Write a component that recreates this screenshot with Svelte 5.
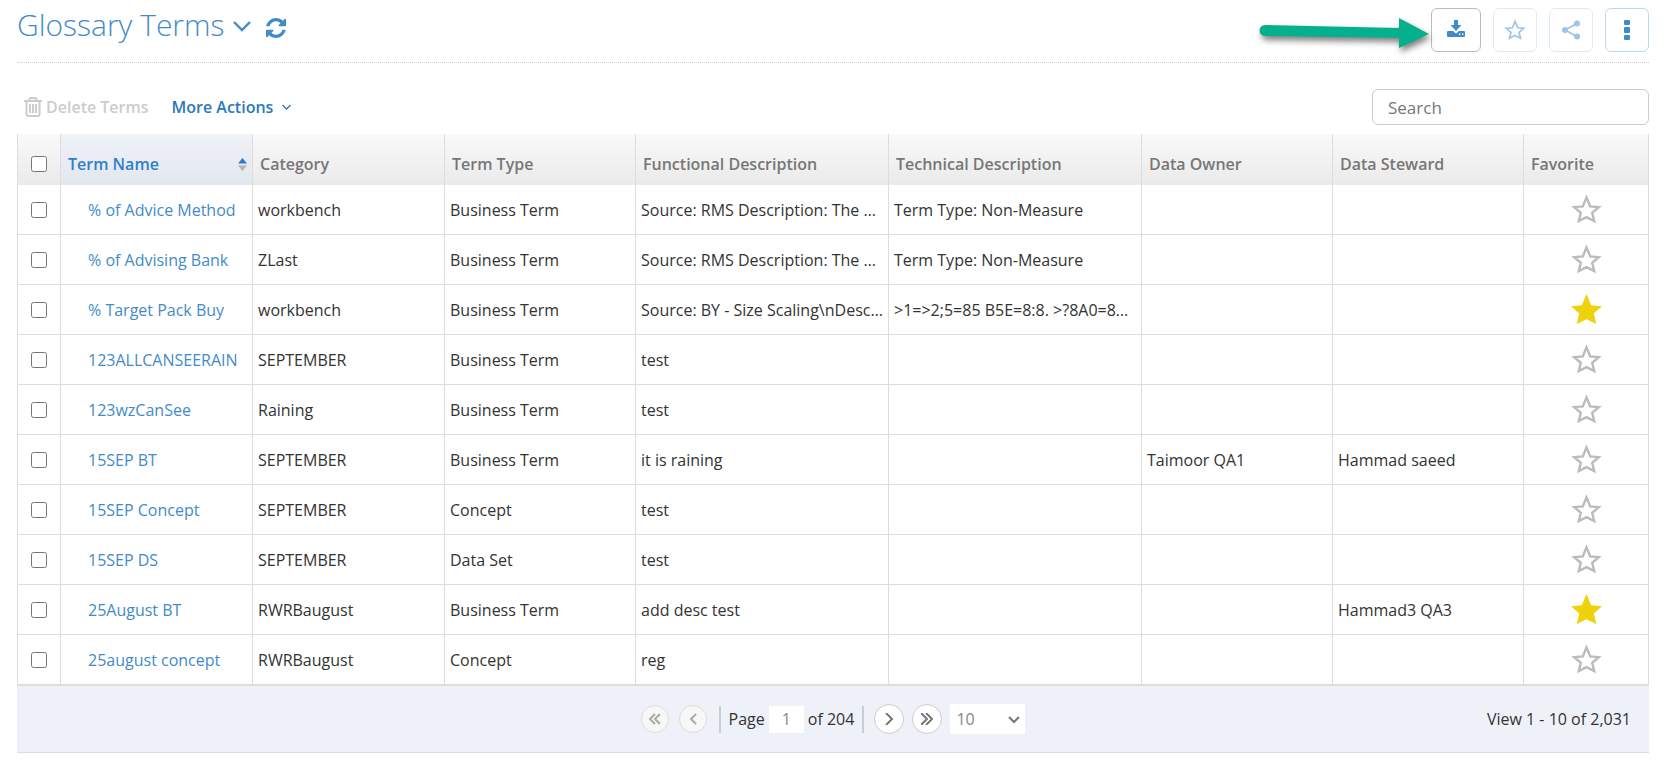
<script lang="ts">
  interface Term {
    name: string;
    category: string;
    type: string;
    functional: string;
    technical?: string;
    owner?: string;
    steward?: string;
    favorite?: boolean;
  }

  let terms = $state<Term[]>([
    { name: "% of Advice Method", category: "workbench", type: "Business Term", functional: "Source: RMS Description: The advice method", technical: "Term Type: Non-Measure" },
    { name: "% of Advising Bank", category: "ZLast", type: "Business Term", functional: "Source: RMS Description: The advising bank", technical: "Term Type: Non-Measure" },
    { name: "% Target Pack Buy", category: "workbench", type: "Business Term", functional: "Source: BY - Size Scaling\\nDescription: target", technical: ">1=>2;5=85 B5E=8:8. >?8A0=85 B5E=8:8", favorite: true },
    { name: "123ALLCANSEERAIN", category: "SEPTEMBER", type: "Business Term", functional: "test" },
    { name: "123wzCanSee", category: "Raining", type: "Business Term", functional: "test" },
    { name: "15SEP BT", category: "SEPTEMBER", type: "Business Term", functional: "it is raining", owner: "Taimoor QA1", steward: "Hammad saeed" },
    { name: "15SEP Concept", category: "SEPTEMBER", type: "Concept", functional: "test" },
    { name: "15SEP DS", category: "SEPTEMBER", type: "Data Set", functional: "test" },
    { name: "25August BT", category: "RWRBaugust", type: "Business Term", functional: "add desc test", steward: "Hammad3 QA3", favorite: true },
    { name: "25august concept", category: "RWRBaugust", type: "Concept", functional: "reg" },
  ]);

  let search = $state("");
  let page = $state("1");
  let pageSize = $state("10");
</script>

<div class="screen">
  <header>
    <h1>Glossary Terms</h1>
    <button class="bare title-caret" aria-label="Switch view">
      <svg width="18" height="12" viewBox="0 0 18 12"><path d="M1 2l8 8 8-8" fill="none" stroke="currentColor" stroke-width="2.4" /></svg>
    </button>
    <button class="bare refresh" aria-label="Refresh">
      <svg width="20" height="20" viewBox="0 0 1536 1536">
        <path fill="currentColor" d="M1511 928q0 5-1 7-64 268-268 434.500T764 1536q-146 0-282.500-55T238 1324l-129 129q-19 19-45 19t-45-19-19-45V960q0-26 19-45t45-19h448q26 0 45 19t19 45-19 45l-137 137q71 66 161 102t187 36q134 0 250-65t186-179q11-17 53-117 8-23 30-23h192q13 0 22.500 9.500t9.500 22.500zm25-800v448q0 26-19 45t-45 19h-448q-26 0-45-19t-19-45 19-45l138-138Q969 256 768 256q-134 0-250 65T332 500q-11 17-53 117-8 23-30 23H50q-13 0-22.500-9.500T18 608v-7q65-268 270-434.500T768 0q146 0 284 55.500T1297 212l130-129q19-19 45-19t45 19 19 45z" />
      </svg>
    </button>

    <svg class="pointer" width="180" height="44" viewBox="0 0 180 44" aria-hidden="true">
      <path d="M14 17l134 3V10l30 16-30 14V30L14 28a5.500 5.500 0 0 1 0-11z" fill="#06b08f" />
    </svg>

    <div class="tools">
      <button class="tool download" aria-label="Download">
        <svg width="18" height="17" viewBox="0 0 18 17" fill="currentColor">
          <path d="M7 0h4v5h3.500L9 11 3.500 5H7z" />
          <path d="M1 11h5l3 2.500L12 11h5a1 1 0 0 1 1 1v4a1 1 0 0 1-1 1H1a1 1 0 0 1-1-1v-4a1 1 0 0 1 1-1z" />
          <path d="M12 13.500h1.400V15H12zM15 13.500h1.400V15H15z" fill="#fff" />
        </svg>
      </button>
      <button class="tool faded" aria-label="Add to favorites">
        {@render star(22, false)}
      </button>
      <button class="tool faded" aria-label="Share">
        <svg width="18" height="20" viewBox="0 0 18 20" fill="currentColor">
          <path d="M15 3.500L3 10l12 6.500" fill="none" stroke="currentColor" stroke-width="1.800" />
          <circle cx="15" cy="3.500" r="3" /><circle cx="3" cy="10" r="3" /><circle cx="15" cy="16.500" r="3" />
        </svg>
      </button>
      <button class="tool" aria-label="More options">
        <svg width="6" height="20" viewBox="0 0 6 20" fill="currentColor">
          <rect width="6" height="5" rx="1" /><rect y="7" width="6" height="6" rx="1" /><rect y="15" width="6" height="5" rx="1" />
        </svg>
      </button>
    </div>
  </header>

  <div class="actions">
    <button class="bare delete" disabled>
      <svg width="18" height="20" viewBox="0 0 18 20" fill="none" stroke="currentColor" stroke-width="2">
        <path d="M0 4h18M5.500 4V2q0-1 1-1h5q1 0 1 1v2" />
        <path d="M2.500 4.500v12.500q0 2 2 2h9q2 0 2-2V4.500M6 7v9M9 7v9M12 7v9" />
      </svg>
      Delete Terms
    </button>
    <button class="bare more">
      More Actions
      <svg width="9" height="6" viewBox="0 0 9 6"><path d="M.500 1l4 4 4-4" fill="none" stroke="currentColor" stroke-width="1.300" /></svg>
    </button>
    <input class="search" type="text" placeholder="Search" aria-label="Search" bind:value={search} />
  </div>

  <table>
    <colgroup>
      <col class="c-check" />
      <col class="c-name" />
      <col class="c-name" />
      <col class="c-person" />
      <col class="c-desc" />
      <col class="c-desc" />
      <col class="c-person" />
      <col class="c-person" />
      <col class="c-fav" />
    </colgroup>
    <thead>
      <tr>
        <th class="check"><input type="checkbox" aria-label="Select all terms" /></th>
        <th class="sorted" aria-sort="ascending">
          <span class="sort">
            Term Name
            <svg width="9" height="13" viewBox="0 0 9 13"><path d="M0 5.500L4.500 0 9 5.500z" fill="#2d7bd0" /><path d="M0 7.500h9L4.500 13z" fill="#b4b4b4" /></svg>
          </span>
        </th>
        <th>Category</th>
        <th>Term Type</th>
        <th>Functional Description</th>
        <th>Technical Description</th>
        <th>Data Owner</th>
        <th>Data Steward</th>
        <th>Favorite</th>
      </tr>
    </thead>
    <tbody>
      {#each terms as term (term.name)}
        <tr>
          <td class="check"><input type="checkbox" aria-label={`Select ${term.name}`} /></td>
          <td class="name"><a href="#term">{term.name}</a></td>
          <td>{term.category}</td>
          <td>{term.type}</td>
          <td>{term.functional}</td>
          <td>{term.technical ?? ""}</td>
          <td>{term.owner ?? ""}</td>
          <td>{term.steward ?? ""}</td>
          <td class="fav">
            <button
              class="bare"
              class:on={term.favorite}
              aria-label={`Favorite ${term.name}`}
              aria-pressed={!!term.favorite}
              onclick={() => (term.favorite = !term.favorite)}
            >
              {@render star(31, !!term.favorite)}
            </button>
          </td>
        </tr>
      {/each}
    </tbody>
  </table>

  <footer>
    <nav class="pager" aria-label="Pagination">
      <button class="round" disabled aria-label="First page">
        <svg width="12" height="12" viewBox="0 0 12 12"><path d="M6 1L1 6l5 5M11 1L6 6l5 5" /></svg>
      </button>
      <button class="round" disabled aria-label="Previous page">
        <svg width="12" height="12" viewBox="0 0 12 12"><path d="M9 1L4 6l5 5" /></svg>
      </button>
      <label class="page">
        Page
        <input type="text" bind:value={page} />
        of 204
      </label>
      <button class="round" aria-label="Next page">
        <svg width="12" height="12" viewBox="0 0 12 12"><path d="M3 0l6 6-6 6" /></svg>
      </button>
      <button class="round" aria-label="Last page">
        <svg width="12" height="12" viewBox="0 0 12 12"><path d="M0 0l6 6-6 6M5 0l6 6-6 6" /></svg>
      </button>
      <span class="size">
        <select aria-label="Rows per page" bind:value={pageSize}>
          <option>10</option>
          <option>20</option>
          <option>50</option>
        </select>
        <svg width="12" height="8" viewBox="0 0 12 8"><path d="M1 1l5 5 5-5" /></svg>
      </span>
    </nav>
    <span class="range">View 1 - 10 of 2,031</span>
  </footer>
</div>

{#snippet star(size: number, filled: boolean)}
  <svg width={size} height={size} viewBox="0 0 31 31" aria-hidden="true">
    {#if filled}
      <path d="M15.500 0l4.700 11.300 10.800 1-8.200 7.200 2.500 10.500-9.800-4.800L5.700 30l2.500-10.500L0 12.300l10.800-1z" fill="currentColor" />
    {:else}
      <path d="M15.500 3.400l3.700 9 8.600.700-6.600 5.700 2 8.300-7.700-3.900-7.700 3.900 2-8.300-6.600-5.700 8.600-.700z" fill="none" stroke="currentColor" stroke-width="2.400" />
    {/if}
  </svg>
{/snippet}

<style>
  :global(body) {
    background: #fff;
  }
  .screen {
    padding: 8px 16px 16px 17px;
    font-family: "Open Sans", sans-serif;
    font-size: 16px;
    line-height: 22px;
    color: #333;
  }
  button,
  input,
  select {
    font: inherit;
    box-sizing: border-box;
    margin: 0;
  }
  svg {
    display: block;
    flex: none;
  }
  .bare {
    display: flex;
    align-items: center;
    padding: 0;
    border: 0;
    background: none;
    color: inherit;
  }
  header {
    display: flex;
    align-items: flex-start;
    height: 54px;
    border-bottom: 1px dotted #ccc;
    color: #428bca;
  }
  h1 {
    margin: 0;
    font-size: 30px;
    line-height: 34px;
    font-weight: 300;
  }
  .title-caret {
    margin-left: 8px;
    height: 36px;
  }
  .refresh {
    margin-left: 15px;
    height: 40px;
  }
  .pointer {
    margin-left: auto;
    filter: drop-shadow(2px 4px 3px rgb(0 0 0 / 50%));
  }
  .tools {
    display: flex;
    gap: 12px;
  }
  .tool {
    display: flex;
    align-items: center;
    justify-content: center;
    width: 44px;
    height: 44px;
    padding: 0;
    border: 1px solid #bcd9ea;
    border-radius: 6px;
    background: #fff;
    color: #428bca;
  }
  .tool.download {
    width: 50px;
    border-color: #bbb;
    padding-bottom: 4px;
  }
  .tool.faded {
    opacity: 0.5;
  }
  .actions {
    display: flex;
    align-items: center;
    padding: 26px 0 9px 7px;
    font-weight: 600;
  }
  .delete {
    gap: 4px;
    color: #ccc;
  }
  .more {
    gap: 9px;
    margin: 0 auto 0 23px;
    color: #2a78bd;
  }
  .search {
    width: 277px;
    height: 36px;
    padding: 0 15px;
    border: 1px solid #ccc;
    border-radius: 6px;
    background: #fff;
    font-size: 17px;
    font-weight: 400;
  }
  .search::placeholder {
    color: #777;
  }

  table {
    width: 100%;
    table-layout: fixed;
    border-collapse: separate;
    border-spacing: 0;
    border-left: 1px solid #ddd;
  }
  .c-check {
    width: 43px;
  }
  .c-name {
    width: 192px;
  }
  .c-person {
    width: 191px;
  }
  .c-desc {
    width: 253px;
  }
  .c-fav {
    width: 125px;
  }
  th,
  td {
    box-sizing: border-box;
    border-right: 1px solid #ddd;
    text-align: left;
    white-space: nowrap;
    overflow: hidden;
    text-overflow: ellipsis;
  }
  th {
    height: 51px;
    padding: 9px 7px 0;
    background: linear-gradient(#f9f9f9, #eaeaea);
    color: #777;
    font-weight: 600;
  }
  th.sorted {
    padding-right: 5px;
    background: linear-gradient(#eff3f8, #e2e6ee);
    color: #307ecc;
  }
  .sort {
    display: flex;
    align-items: center;
    justify-content: space-between;
  }
  td {
    height: 50px;
    padding: 0 5px;
    border-bottom: 1px solid #ddd;
  }
  td.name {
    padding-left: 27px;
  }
  td a {
    color: #428bca;
    text-decoration: none;
  }
  .check {
    padding-left: 0;
    padding-right: 0;
    text-align: center;
  }
  .check input {
    display: block;
    width: 16px;
    height: 16px;
    margin: 0 auto;
  }
  .fav .bare {
    margin: 0 auto;
    color: #bbb;
  }
  .fav .on {
    color: #f0d20c;
  }

  footer {
    display: grid;
    grid-template-columns: 1fr auto 1fr;
    align-items: center;
    height: 66px;
    border-top: 1px solid #ddd;
    border-bottom: 1px solid #ddd;
    background: #eef1f7;
  }
  .pager {
    grid-column: 2;
    display: flex;
    align-items: center;
    gap: 8px;
  }
  .round {
    display: flex;
    align-items: center;
    justify-content: center;
    width: 30px;
    height: 30px;
    padding: 0;
    border: 1px solid #ccc;
    border-radius: 50%;
    background: #fff;
    color: #777;
  }
  .round:disabled {
    width: 28px;
    height: 28px;
    margin-right: 2px;
    border-color: #ddd;
    background: #f7f7f7;
    color: #aaa;
  }
  .round path,
  .size path {
    fill: none;
    stroke: currentColor;
    stroke-width: 2;
  }
  .page {
    display: flex;
    align-items: center;
    gap: 4px;
    margin: 0 2px;
    padding: 0 8px;
    border: solid #c5d0d4;
    border-width: 0 2px;
  }
  .page input {
    width: 35px;
    height: 27px;
    padding: 0;
    border: 0;
    background: #fff;
    color: #888;
    text-align: center;
  }
  .size {
    position: relative;
    color: #777;
  }
  .size select {
    appearance: none;
    width: 75px;
    height: 30px;
    padding: 0 6px;
    border: 0;
    border-radius: 0;
    background: #fff;
    color: #888;
    display: block;
  }
  .size svg {
    position: absolute;
    right: 5px;
    top: 12px;
    pointer-events: none;
  }
  .range {
    padding-right: 18px;
    text-align: right;
  }
</style>
